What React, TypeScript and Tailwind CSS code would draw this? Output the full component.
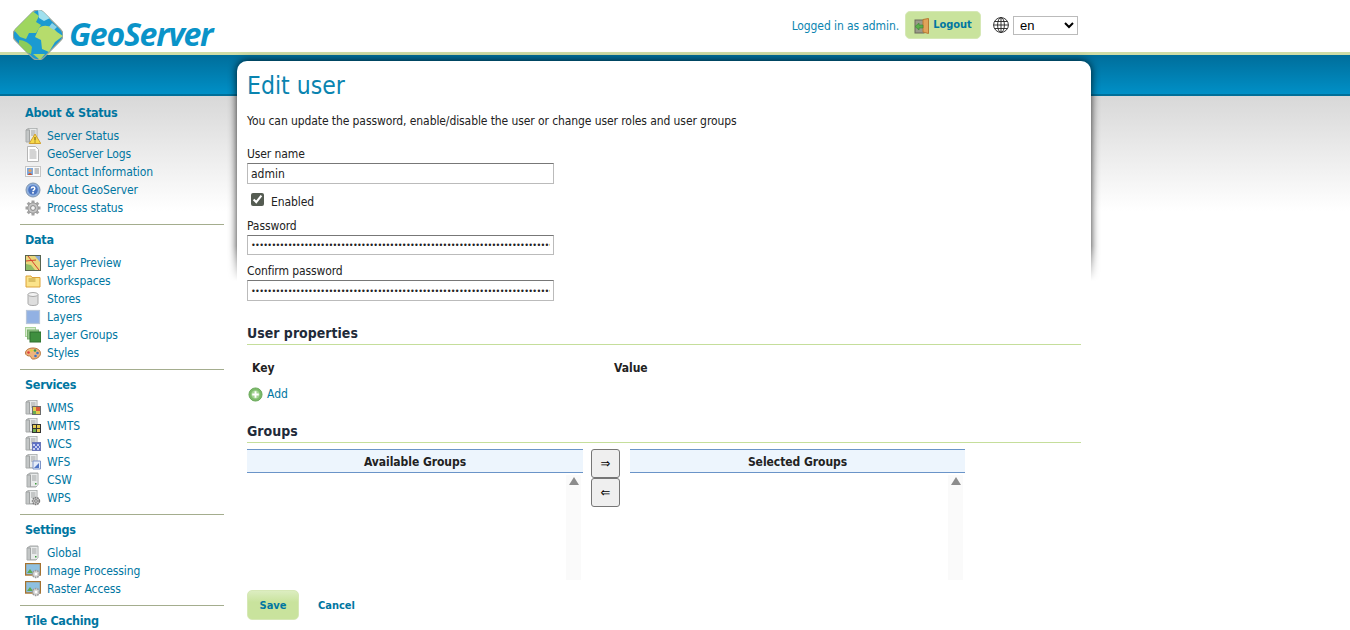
import React from "react";

const Srv = ({ x = 0, y = 0 }: { x?: number; y?: number }) => (
  <g transform={`translate(${x} ${y})`}>
    <path d="M1 3 4 1h8v12l-2 2H1z" fill="#c3c6c6" stroke="#a8abab" />
    <path d="M4.500 2h7v12h-7z" fill="#e9ebeb" />
    <path d="M1 3h3.500v12" fill="none" stroke="#a0a3a3" />
    <path d="M6 4h4.500M6 6h4.500M6 8h4.500" stroke="#a0a3a3" />
    <rect x="9" y="11" width="1.500" height="1.500" fill="#3a9a3a" />
  </g>
);

type IconName = string;

const Icon = ({ name }: { name: IconName }) => {
  const body: Record<string, React.ReactNode> = {
    status: (
      <>
        <Srv x={0} y={-1} />
        <path d="M10 6 15.800 15.500H4.200z" fill="#f7d84a" stroke="#d0a030" />
        <path d="M10 9v3.500M10 13.500v1" stroke="#6a5210" />
      </>
    ),
    logs: (
      <>
        <path d="M2.500.5h8l3 3v12h-11z" fill="#fff" stroke="#b5b5b5" />
        <path d="M4.500 4h6M4.500 6h7M4.500 8h7M4.500 10h7M4.500 12h7" stroke="#a9a9a9" />
      </>
    ),
    contact: (
      <>
        <rect x=".5" y="2.500" width="15" height="10" fill="#fafafa" stroke="#c6c6c6" />
        <rect x="2" y="4" width="6" height="7" fill="#7da6da" />
        <circle cx="5" cy="6.500" r="1.600" fill="#e9a25a" />
        <path d="M3 11c0-2.500 4-2.500 4 0z" fill="#c8562f" />
        <path d="M9.500 5h4.500M9.500 7h4.500M9.500 9h4.500" stroke="#8a8a8a" />
      </>
    ),
    about: (
      <>
        <circle cx="8" cy="8" r="7" fill="#8fb0e0" stroke="#8296ad" />
        <circle cx="8" cy="8" r="4.800" fill="#4a74c0" />
        <path d="M6.300 6.500C6.500 4.600 9.800 4.600 9.800 6.500 9.800 7.800 8 7.800 8 9.300" fill="none" stroke="#fff" strokeWidth="1.500" />
        <rect x="7.200" y="10" width="1.600" height="1.600" fill="#fff" />
      </>
    ),
    process: (
      <>
        <path d="M8 .5v15M.5 8h15M2.700 2.700l10.600 10.600M13.300 2.700 2.700 13.300" stroke="#a2a2a2" strokeWidth="3" />
        <circle cx="8" cy="8" r="5.200" fill="#c4c4c4" stroke="#9a9a9a" />
        <circle cx="8" cy="8" r="2.400" fill="#f4f4f4" stroke="#858585" />
      </>
    ),
    preview: (
      <>
        <rect x=".5" y=".5" width="15" height="15" fill="#e9d77c" stroke="#59644f" />
        <path d="M1 9l5 1 4 5H1z" fill="#8dbb64" />
        <path d="M10 1h5v6z" fill="#86a8d8" />
        <path d="M3 1l11 14M1 6l10-1" stroke="#d6402f" />
      </>
    ),
    workspaces: (
      <>
        <path d="M1 3h5l1 1.500h8V14H1z" fill="#fbe38a" stroke="#dca23a" />
        <path d="M3.500 6h7M3.500 8h7" stroke="#b99a3c" />
      </>
    ),
    stores: (
      <>
        <path d="M3 3.500v9c0 2.700 10 2.700 10 0v-9z" fill="#dedede" stroke="#a8a8a8" />
        <ellipse cx="8" cy="3.500" rx="5" ry="2" fill="#f3f3f3" stroke="#a8a8a8" />
      </>
    ),
    layers: <rect x="1.500" y="1.500" width="13" height="13" fill="#92b1e3" stroke="#b6c5da" strokeWidth="1.200" />,
    groups: (
      <>
        <rect x=".5" y=".5" width="10" height="9" fill="#d9edcf" stroke="#a9d29a" />
        <rect x="2.500" y="3" width="11" height="9" fill="#93c487" stroke="#79ad6c" />
        <rect x="5" y="5" width="11" height="10" fill="#3f8f3f" stroke="#2e6e2e" />
      </>
    ),
    styles: (
      <>
        <path d="M8 3C3 3 .5 5.500.5 8c0 2 2 3 4 3 2 0 1 2.500 3 3 4 .5 8-2.500 8-5.500C15.500 5 12 3 8 3z" fill="#eeb47c" stroke="#b7743c" />
        <circle cx="3.500" cy="7.500" r="1.300" fill="#df3d3d" />
        <circle cx="6.500" cy="5.500" r="1.300" fill="#e6cf3a" />
        <circle cx="10" cy="5.500" r="1.300" fill="#3aa24a" />
        <circle cx="12.500" cy="8" r="1.300" fill="#3e74c8" />
        <circle cx="10.500" cy="11" r="1.300" fill="#3e74c8" />
      </>
    ),
    wms: (
      <>
        <Srv y={-1} />
        <rect x="7.500" y="6.500" width="8" height="8" fill="#e4c94f" stroke="#6c6c6c" />
        <path d="M8 11h3v3H8z" fill="#6cae4d" />
        <path d="M11 7h4v4h-4z" fill="#d85a3e" />
      </>
    ),
    wmts: (
      <>
        <Srv y={-1} />
        <rect x="7.500" y="6.500" width="8" height="8" fill="#e4c94f" stroke="#333" />
        <path d="M11.500 6.500v8M7.500 10.500h8" stroke="#333" />
        <path d="M8 11h3v3H8z" fill="#6cae4d" />
      </>
    ),
    wcs: (
      <>
        <Srv y={-1} />
        <rect x="7.500" y="6.500" width="8" height="8" fill="#5b6fc7" stroke="#6c78b8" />
        <path d="M8 8h2v2H8zM12 8h2v2h-2zM10 10h2v2h-2zM14 10h1v2h-1zM8 12h2v2H8zM12 12h2v2h-2z" fill="#c5cdf0" />
      </>
    ),
    wfs: (
      <>
        <Srv y={-1} />
        <path d="M8 7h7.500v8H8z" fill="#e4ebf8" stroke="#7f95c8" />
        <path d="M9 14l5-5v5z" fill="#4f74c4" />
      </>
    ),
    csw: <Srv x={1} />,
    wps: (
      <>
        <Srv y={-1} />
        <circle cx="11" cy="11" r="3.400" fill="#c9c9c9" stroke="#7c7c7c" strokeWidth="1.600" strokeDasharray="1.600 .8" />
        <circle cx="11" cy="11" r="1.300" fill="#fff" stroke="#777" />
      </>
    ),
    global: <Srv x={1} />,
    image: (
      <>
        <rect x=".5" y=".5" width="15" height="11.500" fill="#8ec0e0" stroke="#a5722f" strokeWidth="1.400" />
        <path d="M2 10l3-4 3 4z" fill="#5fa84e" />
        <circle cx="11" cy="11" r="3.400" fill="#d9d9d9" stroke="#9a9a9a" strokeWidth="1.600" strokeDasharray="1.600 .8" />
        <circle cx="11" cy="11" r="1.200" fill="#fff" />
      </>
    ),
  };
  return (
    <svg viewBox="0 0 16 16" className="w-4 h-4 shrink-0">
      {body[name]}
    </svg>
  );
};

const sections: { title: string; items: [string, IconName][] }[] = [
  {
    title: "About & Status",
    items: [
      ["Server Status", "status"],
      ["GeoServer Logs", "logs"],
      ["Contact Information", "contact"],
      ["About GeoServer", "about"],
      ["Process status", "process"],
    ],
  },
  {
    title: "Data",
    items: [
      ["Layer Preview", "preview"],
      ["Workspaces", "workspaces"],
      ["Stores", "stores"],
      ["Layers", "layers"],
      ["Layer Groups", "groups"],
      ["Styles", "styles"],
    ],
  },
  {
    title: "Services",
    items: [
      ["WMS", "wms"],
      ["WMTS", "wmts"],
      ["WCS", "wcs"],
      ["WFS", "wfs"],
      ["CSW", "csw"],
      ["WPS", "wps"],
    ],
  },
  {
    title: "Settings",
    items: [
      ["Global", "global"],
      ["Image Processing", "image"],
      ["Raster Access", "image"],
    ],
  },
];

const Logo = () => (
  <svg viewBox="0 0 50 50" className="w-[50px] h-[50px] shrink-0">
    <defs>
      <clipPath id="dia">
        <rect x="5" y="5" width="40" height="40" rx="8" transform="rotate(45 25 25)" />
      </clipPath>
    </defs>
    <rect x="5" y="5" width="40" height="40" rx="8" transform="rotate(45 25 25)" fill="#1b9ad2" stroke="#9aa59a" strokeWidth="1.200" />
    <g clipPath="url(#dia)">
      <path d="M0 16 18 0l8 6-3 6 5 3-5 8-7 0-3 6-6-2-7-8z" fill="#9fd65f" />
      <path d="M26 18c6-5 14-1 18 4l6 4-8 6-6 10-7-3-1-9-6-3z" fill="#b6dc6c" />
      <path d="M6 30c5 0 10 3 13 7l-1 7-6-2-6-7z" fill="#8ccc5a" />
      <path d="M20 44h12l-5 6z" fill="#a8d56b" />
      <path d="M25 0h9l5 7-8 4-5-3z" fill="#9fe0ee" />
      <path d="M39 13l5 4-3 3-5-3z" fill="#8ed3e8" />
    </g>
  </svg>
);

const Section = ({ title, items }: { title: string; items: [string, IconName][] }) => (
  <div className="mb-[6px]">
    <h3 className="pl-[5px] h-[18px] leading-[18px] text-[12.500px] tracking-[-0.3px] font-bold text-[#0076a1] mb-[5px]">{title}</h3>
    <ul className="pl-[5px]">
      {items.map(([label, icon], i) => (
        <li key={label + i} className="flex items-center h-[18px] text-[12px] tracking-[-0.1px] text-[#0076a1]">
          <Icon name={icon} />
          <span className="ml-[6px]">{label}</span>
        </li>
      ))}
    </ul>
    <div className="mt-[7px] h-[1px] bg-[#a4ad8e]" />
  </div>
);

const Field = ({ label, children }: { label: string; children: React.ReactNode }) => (
  <div>
    <label className="block h-[18px] leading-[18px] text-[12px] tracking-[-0.1px] text-[#222]">{label}</label>
    {children}
  </div>
);

const inputCls =
  "block w-[307px] px-[3px] bg-white text-[#222] border border-[#bbbbbb] border-t-[#777777] outline-none";

const Heading = ({ children }: { children: React.ReactNode }) => (
  <h3 className="h-[23px] leading-[22px] text-[14px] font-bold text-[#1f2b3a] border-b border-[#c5de9b]">{children}</h3>
);

const Palette = ({ title, width }: { title: string; width: string }) => (
  <div className={width}>
    <div className="h-[24px] leading-[24px] text-center text-[12px] tracking-[-0.05px] font-bold text-[#222] bg-[#edf5fd] border-y border-[#6a94c8]">
      {title}
    </div>
    <div className="h-[107px] flex justify-end pr-[2px] pt-[2px]">
      <div className="w-[15px] bg-[#fafafa] pt-[2px] flex justify-center">
        <svg viewBox="0 0 12 8" className="w-[12px] h-[8px]">
          <path d="M6 0 11 8H1z" fill="#8c8c8c" />
        </svg>
      </div>
    </div>
  </div>
);

const ArrowBtn = ({ children }: { children: React.ReactNode }) => (
  <button className="w-[29px] h-[29px] bg-[#efefef] border border-[#767676] rounded-[3px] text-[13px] text-black flex items-center justify-center">
    {children}
  </button>
);

export default function App() {
  return (
    <div className="h-screen overflow-hidden bg-white font-['DejaVu_Sans_Condensed','DejaVu_Sans',sans-serif]">
      <header className="h-[55px] border-b-[3px] border-[#cfdca6] relative">
        <div className="flex items-center h-[50px] w-[1078px]">
          <div className="flex items-start pl-[13px] pt-[10px] relative z-10 h-[60px] self-start">
            <Logo />
            <span className="ml-[6px] mt-[2px] text-[32px] leading-[44px] font-bold italic text-[#0a93c8] font-['Open_Sans',sans-serif] tracking-[-1.25px]">
              GeoServer
            </span>
          </div>
          <div className="ml-auto flex items-center">
            <span className="mt-[1px] text-[12px] tracking-[-0.1px] text-[#0a84b0]">Logged in as admin.</span>
            <button className="ml-[6px] w-[76px] h-[28px] pt-[1px] rounded-[5px] bg-[#c9e39d] border border-[#d6e8b6] flex items-center justify-center text-[11px] tracking-[-0.05px] font-bold text-[#0076a1]">
              <svg viewBox="0 0 16 16" className="w-4 h-4 mr-[3px]">
                <rect x="1" y="2" width="9" height="13" fill="#9a9a8a" stroke="#6a6a5a" />
                <path d="M9 1.500 14.500 .5v15L9 14z" fill="#e0a35a" stroke="#b77a33" />
                <path d="M1 8.500 5 5v2h4v3H5v2z" fill="#58b04a" stroke="#3e7f34" strokeWidth=".6" />
              </svg>
              Logout
            </button>
            <svg viewBox="0 0 16 16" className="w-4 h-4 ml-[12px]" fill="none" stroke="#222" strokeWidth=".9">
              <circle cx="8" cy="8" r="7.400" />
              <ellipse cx="8" cy="8" rx="3.400" ry="7.400" />
              <path d="M8 .6v14.800M.6 8h14.800M1.700 4.500h12.600M1.700 11.500h12.600" />
            </svg>
            <select className="ml-[4px] w-[65px] h-[19px] pl-[2px] bg-white text-[13px] text-black border border-[#bbbbbb] outline-none font-['Liberation_Sans',sans-serif]">
              <option>en</option>
            </select>
          </div>
        </div>
      </header>
      <div className="h-[41px] bg-gradient-to-b from-[#006e9b] to-[#0090c7] border-b-2 border-[#006f99]" />
      <div className="flex bg-[linear-gradient(#d8d8d8,#ffffff_115px)] h-[534px]">
        <nav className="w-[237px] shrink-0 pl-[20px] pr-[13px] pt-[8px]">
          {sections.map((s) => (
            <Section key={s.title} title={s.title} items={s.items} />
          ))}
          <h3 className="pl-[5px] h-[18px] leading-[18px] text-[12.500px] tracking-[-0.3px] font-bold text-[#0076a1]">Tile Caching</h3>
        </nav>
        <main className="relative w-[854px] h-[600px] -mt-[35px] shrink-0">
          <div className="absolute -inset-x-[14px] -top-[14px] h-[234px] overflow-hidden [mask-image:linear-gradient(#000_85%,transparent)]">
            <div className="absolute left-[14px] right-[14px] top-[14px] h-[400px] rounded-[10px] shadow-[0_0_9px_rgba(0,0,0,0.85)]" />
          </div>
          <div className="relative h-full bg-white rounded-t-[10px] pl-[10px] pr-[10px]">
            <h1 className="pt-[8px] h-[42px] leading-[34px] text-[24.500px] text-[#0a84b0]">Edit user</h1>
            <p className="mt-[10px] h-[18px] leading-[16px] text-[12px] tracking-[-0.09px] text-[#222]">
              You can update the password, enable/disable the user or change user roles and user groups
            </p>
            <div className="mt-[14px]">
              <Field label="User name">
                <input readOnly value="admin" className={inputCls + " h-[21px] text-[12px]"} />
              </Field>
              <div className="flex items-center h-[33px] pl-[4px] text-[12px] tracking-[-0.1px] text-[#222]">
                <input readOnly type="checkbox" checked className="mb-[2px] w-[13px] h-[13px] accent-[#555c52]" />
                <span className="ml-[7px] mt-[2px]">Enabled</span>
              </div>
              <Field label="Password">
                <input readOnly type="password" value={"x".repeat(90)} className={inputCls + " h-[20px] text-[9px] tracking-[-0.7px]"} />
              </Field>
              <div className="h-[7px]" />
              <Field label="Confirm password">
                <input readOnly type="password" value={"x".repeat(90)} className={inputCls + " h-[21px] text-[9px] tracking-[-0.7px]"} />
              </Field>
            </div>
            <div className="mt-[21px] w-[834px]">
              <Heading>User properties</Heading>
              <div className="flex h-[22px] mt-[12px] text-[12px] font-bold text-[#222] items-center">
                <span className="pl-[5px] w-[367px]">Key</span>
                <span>Value</span>
              </div>
              <div className="flex items-center h-[18px] mt-[6px] text-[12px] text-[#0076a1]">
                <svg viewBox="0 0 16 16" className="w-[15px] h-[15px] ml-[1px]">
                  <circle cx="8" cy="8" r="7" fill="#7cba6a" stroke="#69a85a" />
                  <circle cx="8" cy="8" r="4.500" fill="#a4d494" />
                  <path d="M8 4.500v7M4.500 8h7" stroke="#fff" strokeWidth="2" />
                </svg>
                <span className="ml-[4px]">Add</span>
              </div>
              <div className="mt-[17px]">
                <Heading>Groups</Heading>
              </div>
              <div className="flex mt-[6px]">
                <Palette title="Available Groups" width="w-[336px]" />
                <div className="ml-[8px] w-[39px] flex flex-col">
                  <ArrowBtn>⇒</ArrowBtn>
                  <ArrowBtn>⇐</ArrowBtn>
                </div>
                <Palette title="Selected Groups" width="w-[335px]" />
              </div>
              <div className="flex items-center mt-[10px]">
                <button className="w-[52px] h-[30px] pt-[2px] rounded-[5px] border border-[#d6e8b6] bg-gradient-to-b from-[#dcedc0] to-[#c9e39d] to-40% text-[11px] font-bold text-[#0076a1]">
                  Save
                </button>
                <span className="ml-[19px] mt-[2px] text-[11px] font-bold text-[#0076a1]">Cancel</span>
              </div>
            </div>
          </div>
        </main>
      </div>
    </div>
  );
}
